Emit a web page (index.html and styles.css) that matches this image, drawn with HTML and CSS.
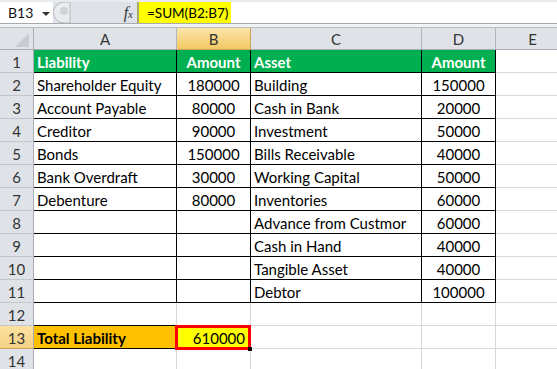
FILE: index.html
```html
<!DOCTYPE html>
<html>
<!-- Header Section -->
<head>
  <meta charset="utf-8">
  <link rel="stylesheet" href="styles.css">
</head>
<!-- Worksheet Section -->
<body>
  <!-- Formula Bar -->
  <div class="formula-bar">
    <div class="name-box">B13<span class="drop-arrow"></span></div>
    <div class="splitter">
      <svg width="19" height="21" viewBox="0 0 19 21">
        <path d="M17 0 L11 0 A10 10 0 0 0 11 21 L17 21 Z" fill="#e9ecef" stroke="#b4b8bd"/>
        <circle cx="11" cy="9" r="4" fill="#cfd3d8"/>
      </svg>
    </div>
    <div class="fx-box"><span class="fx">f<span class="fx-sub">x</span></span></div>
    <div class="formula-input"><span class="formula-text">=SUM(B2:B7)</span></div>
  </div>
  <div class="bar-gap"></div>

  <!-- Grid -->
  <div class="sheet">
    <div class="corner">
      <svg width="33" height="21" viewBox="0 0 33 21"><polygon points="15,19 29,19 29,5" fill="#c8ccd1"/></svg>
    </div>
    <div class="col-head">A</div>
    <div class="col-head active">B</div>
    <div class="col-head">C</div>
    <div class="col-head">D</div>
    <div class="col-head">E</div>

    <div class="row-head">1</div>
    <div class="cell boxed green">Liability</div>
    <div class="cell boxed green center">Amount</div>
    <div class="cell boxed green">Asset</div>
    <div class="cell boxed green center">Amount</div>
    <div class="cell"></div>

    <div class="row-head">2</div>
    <div class="cell boxed">Shareholder Equity</div>
    <div class="cell boxed center">180000</div>
    <div class="cell boxed">Building</div>
    <div class="cell boxed center">150000</div>
    <div class="cell"></div>

    <div class="row-head">3</div>
    <div class="cell boxed">Account Payable</div>
    <div class="cell boxed center">80000</div>
    <div class="cell boxed">Cash in Bank</div>
    <div class="cell boxed center">20000</div>
    <div class="cell"></div>

    <div class="row-head">4</div>
    <div class="cell boxed">Creditor</div>
    <div class="cell boxed center">90000</div>
    <div class="cell boxed">Investment</div>
    <div class="cell boxed center">50000</div>
    <div class="cell"></div>

    <div class="row-head">5</div>
    <div class="cell boxed">Bonds</div>
    <div class="cell boxed center">150000</div>
    <div class="cell boxed">Bills Receivable</div>
    <div class="cell boxed center">40000</div>
    <div class="cell"></div>

    <div class="row-head">6</div>
    <div class="cell boxed">Bank Overdraft</div>
    <div class="cell boxed center">30000</div>
    <div class="cell boxed">Working Capital</div>
    <div class="cell boxed center">50000</div>
    <div class="cell"></div>

    <div class="row-head">7</div>
    <div class="cell boxed">Debenture</div>
    <div class="cell boxed center">80000</div>
    <div class="cell boxed">Inventories</div>
    <div class="cell boxed center">60000</div>
    <div class="cell"></div>

    <div class="row-head">8</div>
    <div class="cell boxed"></div>
    <div class="cell boxed"></div>
    <div class="cell boxed">Advance from Custmor</div>
    <div class="cell boxed center">60000</div>
    <div class="cell"></div>

    <div class="row-head">9</div>
    <div class="cell boxed"></div>
    <div class="cell boxed"></div>
    <div class="cell boxed">Cash in Hand</div>
    <div class="cell boxed center">40000</div>
    <div class="cell"></div>

    <div class="row-head">10</div>
    <div class="cell boxed"></div>
    <div class="cell boxed"></div>
    <div class="cell boxed">Tangible Asset</div>
    <div class="cell boxed center">40000</div>
    <div class="cell"></div>

    <div class="row-head">11</div>
    <div class="cell boxed"></div>
    <div class="cell boxed"></div>
    <div class="cell boxed">Debtor</div>
    <div class="cell boxed center">100000</div>
    <div class="cell"></div>

    <div class="row-head">12</div>
    <div class="cell edge-bottom"></div>
    <div class="cell"></div>
    <div class="cell"></div>
    <div class="cell"></div>
    <div class="cell"></div>

    <div class="row-head active">13</div>
    <div class="cell edge-bottom total">Total Liability</div>
    <div class="cell sum right">610000</div>
    <div class="cell"></div>
    <div class="cell"></div>
    <div class="cell"></div>

    <div class="row-head">14</div>
    <div class="cell"></div>
    <div class="cell"></div>
    <div class="cell"></div>
    <div class="cell"></div>
    <div class="cell"></div>
  </div>
</body>
</html>
```

FILE: styles.css
```css
/* Main Element Styles */
body {
  margin: 0;
  width: 557px;
  height: 369px;
  overflow: hidden;
  background-color: #e8ebef;
  font-family: Lato, "Liberation Sans", sans-serif;
  color: #000;
}

/* Formula Bar Styles */
.formula-bar {
  display: flex;
  height: 21px;
  margin-top: 2px;
  border-bottom: 1px solid #a7abb0;
  background-color: #dfe3e8;
  font-size: 14px;
  line-height: 22px;
}
.name-box {
  position: relative;
  width: 45px;
  padding-left: 8px;
  background-color: #fff;
  color: #111;
}
.drop-arrow {
  position: absolute;
  left: 42px;
  top: 10px;
  border-left: 4px solid transparent;
  border-right: 4px solid transparent;
  border-top: 4px solid #333;
}
.splitter {
  width: 19px;
  height: 21px;
}
.splitter svg {
  display: block;
}
.fx-box {
  width: 61px;
  padding-right: 4px;
  text-align: right;
  border-right: 2px solid #a9a86a;
}
.fx {
  font-family: "Liberation Serif", serif;
  font-style: italic;
  font-size: 16px;
  color: #333;
}
.fx-sub {
  font-size: 11px;
}
.formula-input {
  flex: 1;
  background-color: #fff;
}
.formula-text {
  display: inline-block;
  box-sizing: border-box;
  width: 92px;
  height: 21px;
  padding-left: 8px;
  background-color: #ffff00;
  font-size: 13.5px;
  white-space: nowrap;
}
.bar-gap {
  height: 3px;
  background-color: #f1f3f5;
  border-bottom: 1px solid #b9bdc2;
}

/* Grid Styles */
.sheet {
  display: grid;
  grid-template-columns: 34px 143px 74px 171px 74px 74px;
  grid-template-rows: 22px;
  grid-auto-rows: 23px;
  background-color: #fff;
  font-size: 15px;
}
.sheet > div {
  box-sizing: border-box;
  white-space: nowrap;
  overflow: hidden;
  line-height: 22px;
}
.corner,
.col-head,
.row-head {
  background-color: #dfe3e8;
  color: #333;
  text-align: center;
}
.corner {
  border-right: 1px solid #a9aeb4;
  border-bottom: 1px solid #a9aeb4;
}
.corner svg {
  display: block;
}
.col-head {
  border-right: 1px solid #b1b6bc;
  border-bottom: 1px solid #a9aeb4;
  line-height: 22px;
}
.row-head {
  border-right: 1px solid #a9aeb4;
  border-bottom: 1px solid #c3c7cc;
  padding-top: 1px;
}
.col-head.active {
  background: linear-gradient(#fbe6ab, #f3c862);
  border-right-color: #c9a55a;
  border-bottom-color: #c9a55a;
}
.row-head.active {
  background: linear-gradient(#fbe2a1, #f6d283);
  border-bottom-color: #c9a55a;
}

/* Cell Styles */
.cell {
  padding: 1px 3px 0 3px;
  border-right: 1px solid #d9d9d9;
  border-bottom: 1px solid #d9d9d9;
}
.boxed {
  border-right-color: #000;
  border-bottom-color: #000;
}
.edge-bottom {
  border-bottom-color: #000;
}
.green {
  background-color: #00b050;
  color: #fff;
  font-weight: bold;
}
.center {
  text-align: center;
}
.right {
  text-align: right;
}
.total {
  background-color: #ffc000;
  font-weight: bold;
}

/* Selected Sum Cell */
.sum {
  position: relative;
  overflow: visible !important;
  background-color: #ffff00;
  padding-right: 5px;
}
.sum::after {
  content: "";
  position: absolute;
  top: -1px;
  left: -2px;
  right: -1px;
  bottom: -2px;
  border: 3px solid #ff0000;
}
.sum::before {
  content: "";
  position: absolute;
  right: -2px;
  bottom: -3px;
  width: 4px;
  height: 4px;
  background-color: #000;
  z-index: 1;
}
```
